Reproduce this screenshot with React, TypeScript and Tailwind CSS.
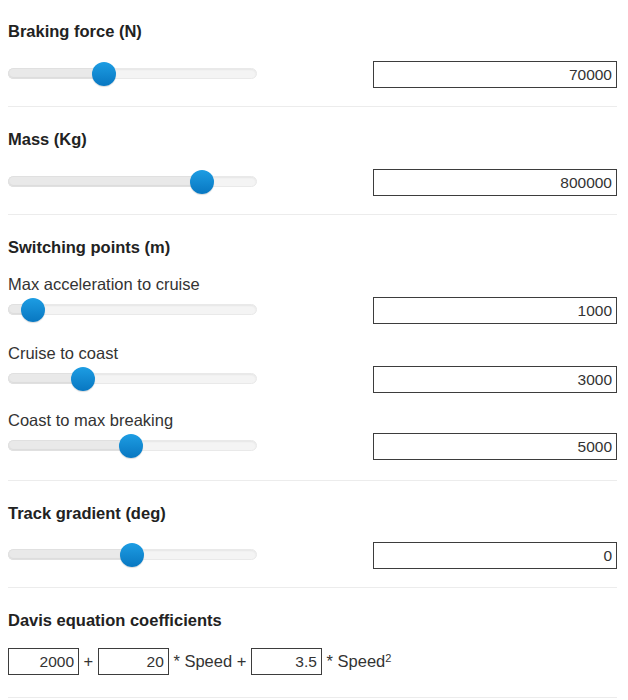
import React from "react";

function Slider({ x }: { x: number }) {
  return (
    <div className="relative w-[249px] h-[11px] -mt-[2px]">
      <div className="absolute inset-0 rounded-full bg-[#f4f4f4] border border-[#e9e9e9] shadow-[inset_0_1px_2px_rgba(0,0,0,0.06)]" />
      <div
        className="absolute left-0 top-0 bottom-0 rounded-l-full bg-[#e9e9e9] border border-[#e0e0e0] border-r-0 shadow-[inset_0_-1px_1px_rgba(0,0,0,0.06)]"
        style={{ width: x }}
      />
      <div
        className="absolute top-1/2 w-[24px] h-[24px] -mt-[12px] -ml-[12px] rounded-full bg-gradient-to-b from-[#1d9de3] to-[#0877c1] shadow-[0_1px_1px_rgba(0,0,0,0.15)]"
        style={{ left: x }}
      />
    </div>
  );
}

function Field({ value, w = "w-[244px]" }: { value: string; w?: string }) {
  return (
    <div
      className={`${w} h-[27px] border border-[#3d3d3d] text-right pr-[4px] text-[15.5px] leading-[25px] text-[#333]`}
    >
      {value}
    </div>
  );
}

function Row({ x, value }: { x: number; value: string }) {
  return (
    <div className="flex items-center justify-between h-[27px]">
      <Slider x={x} />
      <Field value={value} />
    </div>
  );
}

function Heading({ children }: { children: React.ReactNode }) {
  return <div className="text-[16.5px] font-bold leading-[22px] text-[#222]">{children}</div>;
}

function Label({ children }: { children: React.ReactNode }) {
  return <div className="text-[16.5px] leading-[22px] text-[#333]">{children}</div>;
}

function Hr({ top = "mt-[18px]" }: { top?: string }) {
  return <div className={`${top} mb-[21px] h-px bg-[#ececec]`} />;
}

export default function App() {
  return (
    <div className="w-[628px] h-[700px] overflow-hidden bg-white pl-2 pr-[11px] pt-5 font-['Liberation_Sans',Arial,sans-serif] text-[#333]">
      <Heading>Braking force (N)</Heading>
      <div className="mt-[19px]">
        <Row x={96} value="70000" />
      </div>
      <Hr />

      <Heading>Mass (Kg)</Heading>
      <div className="mt-[19px]">
        <Row x={194} value="800000" />
      </div>
      <Hr />

      <Heading>Switching points (m)</Heading>
      <div className="mt-[15px]">
        <Label>Max acceleration to cruise</Label>
        <div className="mt-[2px]">
          <Row x={25} value="1000" />
        </div>
      </div>
      <div className="mt-[18px]">
        <Label>Cruise to coast</Label>
        <div className="mt-[2px]">
          <Row x={75} value="3000" />
        </div>
      </div>
      <div className="mt-[16px]">
        <Label>Coast to max breaking</Label>
        <div className="mt-[2px]">
          <Row x={123} value="5000" />
        </div>
      </div>
      <Hr top="mt-[20px]" />

      <Heading>Track gradient (deg)</Heading>
      <div className="mt-[18px]">
        <Row x={124} value="0" />
      </div>
      <Hr />

      <Heading>Davis equation coefficients</Heading>
      <div className="mt-[17px] flex items-center text-[16.5px] text-[#333]">
        <Field value="2000" w="w-[71px]" />
        <span className="whitespace-pre"> + </span>
        <Field value="20" w="w-[71px]" />
        <span className="whitespace-pre"> * Speed + </span>
        <Field value="3.5" w="w-[71px]" />
        <span className="whitespace-pre">
          {" "}* Speed<sup className="text-[11px]">2</sup>
        </span>
      </div>
      <div className="mt-[22px] h-px bg-[#ececec]" />
    </div>
  );
}
